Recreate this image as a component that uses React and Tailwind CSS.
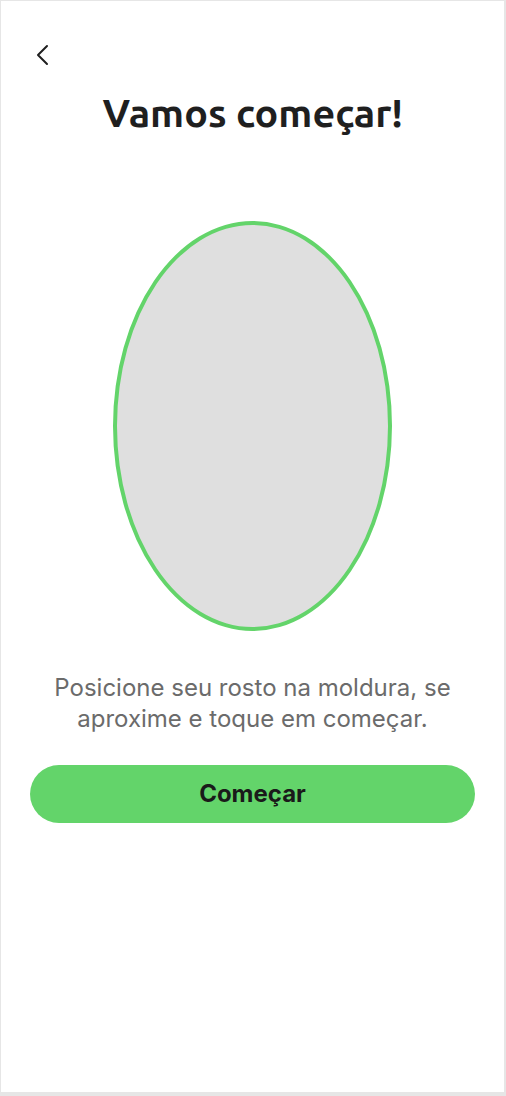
import React from 'react';

export default function App() {
  return (
    <div className="w-[506px] h-[1096px] bg-white border-t border-l border-r-2 border-b-4 border-[#e6e6e6] flex flex-col">
      {/* top bar */}
      <div className="h-[87px] pl-[34px] pt-[43px]">
        <button className="w-[14px] h-[22px] flex items-center justify-center">
          <svg width="14" height="22" viewBox="0 0 14 22" fill="none" stroke="#1f1f1f" strokeWidth="2" strokeLinecap="round" strokeLinejoin="round">
            <path d="M12 2 L3 11 L12 20" />
          </svg>
        </button>
      </div>

      <h1 className="text-center text-[39.5px] leading-[48px] font-bold text-[#1f1f1f] font-['Ubuntu','Open_Sans',sans-serif]">
        Vamos começar!
      </h1>

      {/* face frame */}
      <div className="flex justify-center mt-[85px]">
        <div className="w-[279px] h-[410px] rounded-[50%] bg-[#dfdfdf] border-4 border-[#63d46a]" />
      </div>

      <p className="mt-[41px] px-10 text-center text-[24px] leading-[31px] text-[#6b6b6b] font-['Inter',sans-serif]">
        Posicione seu rosto na moldura, se aproxime e toque em começar.
      </p>

      <div className="px-[29px] mt-[31px]">
        <button className="w-full h-[58px] rounded-full bg-[#63d46a] text-[24px] font-bold text-[#1a1a1a] font-['Inter',sans-serif]">
          Começar
        </button>
      </div>
    </div>
  );
}
